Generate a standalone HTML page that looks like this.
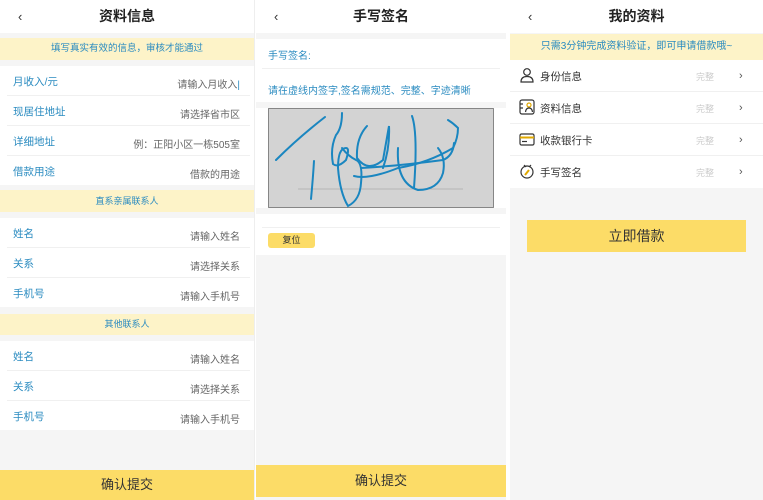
<!DOCTYPE html>
<html><head><meta charset="utf-8"><style>
*{margin:0;padding:0;box-sizing:border-box}
body{width:763px;height:500px;background:#fff;position:relative;overflow:hidden;font-family:"Liberation Sans","Noto Sans CJK SC",sans-serif}
.p{position:absolute;top:0;height:500px;background:#f5f5f5}
.a{position:absolute}
.hd{position:absolute;left:0;right:0;top:0;height:33px;background:#fff;text-align:center;line-height:33px;font-size:14px;font-weight:bold;color:#222}
.bk{position:absolute;left:18px;top:0;font-size:13px;font-weight:normal;color:#333}
.bn{position:absolute;left:0;right:0;background:#fdf3c8;color:#2a8bc0;text-align:center;font-size:9.5px}
.wh{position:absolute;left:0;right:0;background:#fff}
.row{height:30px;margin:0 4px 0 7px;border-bottom:1px solid #f0f0f0;position:relative;font-size:10.5px}
.row:last-child{border-bottom:none}
.row .l{position:absolute;left:6px;top:8px;color:#2a8bc0}
.row .r{position:absolute;right:10px;top:10px;color:#666;font-size:10px}
.ft{position:absolute;left:0;right:0;background:#fcdc67;text-align:center;color:#333;font-size:13px}
.r3{height:32px;border-bottom:1px solid #f0f0f0;position:relative;font-size:10.5px;color:#333}
.r3 .t{position:absolute;left:30px;top:9px}
.r3 .s{position:absolute;left:186px;top:10px;color:#ccc;font-size:9px}
.r3 .g{position:absolute;left:229px;top:10px;color:#555;font-size:11px}
.r3 svg{position:absolute;left:9px;top:7px}
</style></head><body>

<div class="p" style="left:0;width:255px;border-right:1px solid #eee">
<div class="hd"><span class="bk">‹</span>资料信息</div>
<div class="bn" style="top:38px;height:22px;line-height:22px">填写真实有效的信息，审核才能通过</div>
<div class="wh" style="top:66px;height:119px">
<div class="row"><span class="l">月收入/元</span><span class="r">请输入月收入<span style="color:#2a8bc0">|</span></span></div>
<div class="row"><span class="l">现居住地址</span><span class="r">请选择省市区</span></div>
<div class="row"><span class="l">详细地址</span><span class="r">例：正阳小区一栋505室</span></div>
<div class="row"><span class="l">借款用途</span><span class="r">借款的用途</span></div>
</div>
<div class="bn" style="top:190px;height:22px;line-height:22px;font-size:9px">直系亲属联系人</div>
<div class="wh" style="top:218px;height:89px">
<div class="row"><span class="l">姓名</span><span class="r">请输入姓名</span></div>
<div class="row"><span class="l">关系</span><span class="r">请选择关系</span></div>
<div class="row"><span class="l">手机号</span><span class="r">请输入手机号</span></div>
</div>
<div class="bn" style="top:314px;height:21px;line-height:21px;font-size:9px">其他联系人</div>
<div class="wh" style="top:341px;height:89px">
<div class="row"><span class="l">姓名</span><span class="r">请输入姓名</span></div>
<div class="row"><span class="l">关系</span><span class="r">请选择关系</span></div>
<div class="row"><span class="l">手机号</span><span class="r">请输入手机号</span></div>
</div>
<div class="ft" style="top:470px;height:30px;line-height:30px">确认提交</div>
</div>

<div class="p" style="left:256px;width:250px">
<div class="hd"><span class="bk">‹</span>手写签名</div>
<div class="wh" style="top:39px;height:63px">
<div class="a" style="left:12px;top:8px;font-size:10px;color:#2a8bc0">手写签名:</div>
<div class="a" style="left:6px;right:6px;top:29px;border-top:1px solid #f0f0f0"></div>
<div class="a" style="left:12px;top:43px;font-size:10px;color:#2a8bc0">请在虚线内签字,签名需规范、完整、字迹清晰</div>
</div>
<div class="wh" style="top:108px;height:100px">
<svg class="a" style="left:12px;top:0" width="226" height="100" viewBox="0 0 226 100">
<rect x="0.5" y="0.5" width="225" height="99" fill="#d3d3d3" stroke="#222" stroke-dasharray="1,1"/>
<line x1="30" y1="81" x2="195" y2="81" stroke="#aaa" stroke-width="0.8"/>
<g fill="none" stroke="#1a86c0" stroke-width="2" stroke-linecap="round">
<path d="M8 52 Q30 30 57 9"/>
<path d="M46 53 Q45 70 43 91"/>
<path d="M74 5 Q74 20 68 27 Q62 40 65 56 Q70 60 78 52 Q82 40 78 40 Q70 40 70 60 Q72 85 80 98 Q92 92 93 75 Q95 55 88 52 Q80 48 74 40"/>
<path d="M99 18 Q88 30 89 50 Q100 65 115 52 Q118 35 121 18 Q122 40 115 60"/>
<path d="M86 68 Q100 72 130 60 Q160 55 185 40 Q190 30 190 20 Q185 15 180 12"/>
<path d="M93 60 Q130 58 175 52 Q185 48 186 35"/>
<path d="M144 8 Q150 25 146 80"/>
<path d="M130 40 Q128 75 150 82 Q170 82 175 65 Q178 50 170 40"/>
</g></svg>
</div>
<div class="wh" style="top:214px;height:41px">
<div class="a" style="left:6px;right:6px;top:13px;border-top:1px solid #f0f0f0"></div>
<div class="a" style="left:12px;top:19px;width:47px;height:15px;background:#fcdc67;border-radius:3px;font-size:9px;line-height:15px;text-align:center;color:#333">复位</div>
</div>
<div class="ft" style="top:465px;height:32px;line-height:32px">确认提交</div>
</div>

<div class="p" style="left:510px;width:253px">
<div class="hd"><span class="bk">‹</span>我的资料</div>
<div class="bn" style="top:34px;height:26px;line-height:26px;font-size:10px">只需3分钟完成资料验证，即可申请借款哦~</div>
<div class="wh" style="top:60px;height:128px">
<div class="r3"><svg width="16" height="16" viewBox="0 0 16 16" fill="none" stroke="#333" stroke-width="1.2"><circle cx="8" cy="5" r="3.3"/><path d="M2 15 Q2 9.5 8 9.5 Q14 9.5 14 15 Z"/></svg><span class="t">身份信息</span><span class="s">完整</span><span class="g">›</span></div>
<div class="r3"><svg width="16" height="16" viewBox="0 0 16 16" fill="none" stroke="#333" stroke-width="1.2"><rect x="1" y="1" width="14" height="14" rx="2"/><circle cx="10" cy="6" r="2" stroke="#e0a800"/><path d="M6.5 13 Q7 9 10 9 Q13 9 13.5 13"/><path d="M1 5h3M1 9h3"/></svg><span class="t">资料信息</span><span class="s">完整</span><span class="g">›</span></div>
<div class="r3"><svg width="16" height="16" viewBox="0 0 16 16" fill="none" stroke="#333" stroke-width="1.2"><rect x="1" y="3" width="14" height="11" rx="1.5"/><path d="M1 6.5h14" stroke="#e0a800" stroke-width="2"/><path d="M3 10.5h5"/></svg><span class="t">收款银行卡</span><span class="s">完整</span><span class="g">›</span></div>
<div class="r3" style="border-bottom:none"><svg width="16" height="16" viewBox="0 0 16 16" fill="none" stroke="#333" stroke-width="1.2"><circle cx="8" cy="9" r="6"/><path d="M5 2l2 2M10 4l2-2"/><path d="M6 12 L10 7" stroke="#e0a800" stroke-width="2"/></svg><span class="t">手写签名</span><span class="s">完整</span><span class="g">›</span></div>
</div>
<div class="a" style="left:17px;top:220px;width:219px;height:32px;background:#fcdc67;text-align:center;line-height:32px;font-size:14px;color:#333">立即借款</div>
</div>
</body></html>
